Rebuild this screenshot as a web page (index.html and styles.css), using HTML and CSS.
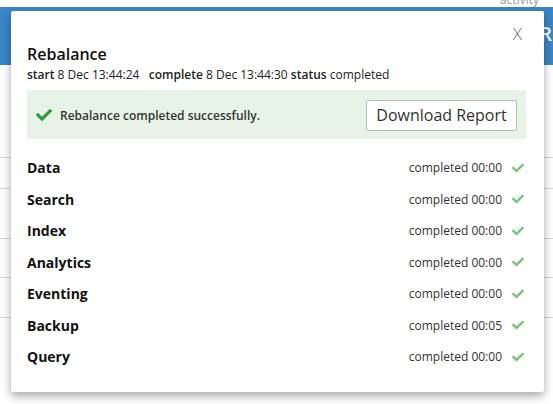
FILE: index.html
```html
<!DOCTYPE html>
<html>
<head>
<meta charset="utf-8">
<link rel="stylesheet" href="styles.css">
</head>
<body>
<div class="page">
  <div class="topnote">activity</div>
  <div class="band"><span class="band-letter">R</span></div>
  <div class="bg-list">
    <div class="bg-row r1"></div>
    <div class="bg-row r2"></div>
    <div class="bg-row r3"></div>
    <div class="bg-row r4"></div>
    <div class="bg-row r5"></div>
  </div>

  <div class="modal">
    <button class="close">X</button>
    <div class="header">
      <h2 class="title">Rebalance</h2>
      <div class="meta"><b>start</b> 8 Dec 13:44:24 &nbsp; <b>complete</b> 8 Dec 13:44:30 <b>status</b> completed</div>
    </div>
    <div class="alert">
      <div class="alert-msg">
        <svg class="alert-check" viewBox="0 0 512 512"><path d="M173.898 439.404l-166.4-166.4c-9.997-9.997-9.997-26.206 0-36.204l36.203-36.204c9.997-9.998 26.207-9.998 36.204 0L192 312.69 432.095 72.596c9.997-9.997 26.207-9.997 36.204 0l36.203 36.204c9.997 9.997 9.997 26.206 0 36.204l-294.4 294.401c-9.998 9.997-26.207 9.997-36.204-.001z"/></svg>
        <span>Rebalance completed successfully.</span>
      </div>
      <button class="btn">Download Report</button>
    </div>
    <div class="services">
      <div class="svc"><span class="svc-name">Data</span><span class="svc-status">completed 00:00<svg class="ok" viewBox="0 0 512 512"><path d="M173.898 439.404l-166.4-166.4c-9.997-9.997-9.997-26.206 0-36.204l36.203-36.204c9.997-9.998 26.207-9.998 36.204 0L192 312.69 432.095 72.596c9.997-9.997 26.207-9.997 36.204 0l36.203 36.204c9.997 9.997 9.997 26.206 0 36.204l-294.4 294.401c-9.998 9.997-26.207 9.997-36.204-.001z"/></svg></span></div>
      <div class="svc"><span class="svc-name">Search</span><span class="svc-status">completed 00:00<svg class="ok" viewBox="0 0 512 512"><path d="M173.898 439.404l-166.4-166.4c-9.997-9.997-9.997-26.206 0-36.204l36.203-36.204c9.997-9.998 26.207-9.998 36.204 0L192 312.69 432.095 72.596c9.997-9.997 26.207-9.997 36.204 0l36.203 36.204c9.997 9.997 9.997 26.206 0 36.204l-294.4 294.401c-9.998 9.997-26.207 9.997-36.204-.001z"/></svg></span></div>
      <div class="svc"><span class="svc-name">Index</span><span class="svc-status">completed 00:00<svg class="ok" viewBox="0 0 512 512"><path d="M173.898 439.404l-166.4-166.4c-9.997-9.997-9.997-26.206 0-36.204l36.203-36.204c9.997-9.998 26.207-9.998 36.204 0L192 312.69 432.095 72.596c9.997-9.997 26.207-9.997 36.204 0l36.203 36.204c9.997 9.997 9.997 26.206 0 36.204l-294.4 294.401c-9.998 9.997-26.207 9.997-36.204-.001z"/></svg></span></div>
      <div class="svc"><span class="svc-name">Analytics</span><span class="svc-status">completed 00:00<svg class="ok" viewBox="0 0 512 512"><path d="M173.898 439.404l-166.4-166.4c-9.997-9.997-9.997-26.206 0-36.204l36.203-36.204c9.997-9.998 26.207-9.998 36.204 0L192 312.69 432.095 72.596c9.997-9.997 26.207-9.997 36.204 0l36.203 36.204c9.997 9.997 9.997 26.206 0 36.204l-294.4 294.401c-9.998 9.997-26.207 9.997-36.204-.001z"/></svg></span></div>
      <div class="svc"><span class="svc-name">Eventing</span><span class="svc-status">completed 00:00<svg class="ok" viewBox="0 0 512 512"><path d="M173.898 439.404l-166.4-166.4c-9.997-9.997-9.997-26.206 0-36.204l36.203-36.204c9.997-9.998 26.207-9.998 36.204 0L192 312.69 432.095 72.596c9.997-9.997 26.207-9.997 36.204 0l36.203 36.204c9.997 9.997 9.997 26.206 0 36.204l-294.4 294.401c-9.998 9.997-26.207 9.997-36.204-.001z"/></svg></span></div>
      <div class="svc"><span class="svc-name">Backup</span><span class="svc-status">completed 00:05<svg class="ok" viewBox="0 0 512 512"><path d="M173.898 439.404l-166.4-166.4c-9.997-9.997-9.997-26.206 0-36.204l36.203-36.204c9.997-9.998 26.207-9.998 36.204 0L192 312.69 432.095 72.596c9.997-9.997 26.207-9.997 36.204 0l36.203 36.204c9.997 9.997 9.997 26.206 0 36.204l-294.4 294.401c-9.998 9.997-26.207 9.997-36.204-.001z"/></svg></span></div>
      <div class="svc"><span class="svc-name">Query</span><span class="svc-status">completed 00:00<svg class="ok" viewBox="0 0 512 512"><path d="M173.898 439.404l-166.4-166.4c-9.997-9.997-9.997-26.206 0-36.204l36.203-36.204c9.997-9.998 26.207-9.998 36.204 0L192 312.69 432.095 72.596c9.997-9.997 26.207-9.997 36.204 0l36.203 36.204c9.997 9.997 9.997 26.206 0 36.204l-294.4 294.401c-9.998 9.997-26.207 9.997-36.204-.001z"/></svg></span></div>
    </div>
  </div>
</div>
</body>
</html>
```

FILE: styles.css
```css
html, body {
  margin: 0;
  padding: 0;
  background: #fff;
  font-family: "Open Sans", "Liberation Sans", sans-serif;
  color: #222;
  overflow: hidden;
}

.page {
  position: relative;
  width: 553px;
  height: 404px;
  overflow: hidden;
}

.topnote {
  position: absolute;
  top: -9px;
  right: 14px;
  font-size: 12px;
  color: #999;
}

.band {
  margin-top: 7px;
  height: 58px;
  background: #3a86c8;
  display: flex;
  justify-content: flex-end;
  align-items: center;
}

.band-letter {
  color: #fff;
  font-size: 19px;
  font-weight: 600;
  margin-right: 1px;
  margin-top: -4px;
}

.bg-row {
  border-bottom: 1px solid #d6d6d6;
}
.r1 { height: 92px; }
.r2 { height: 30px; }
.r3 { height: 49px; }
.r4 { height: 38px; }
.r5 { height: 39px; }

.modal {
  position: absolute;
  left: 11px;
  top: 11px;
  width: 533px;
  height: 381px;
  box-sizing: border-box;
  padding: 0 18px 0 16px;
  background: #fff;
  border-radius: 2px;
  box-shadow: 0 4px 10px rgba(0, 0, 0, 0.35);
}

.close {
  position: absolute;
  top: 12px;
  right: 22px;
  border: 0;
  background: none;
  padding: 0;
  font-family: "Open Sans", "Liberation Sans", sans-serif;
  font-size: 17px;
  font-weight: 300;
  color: #6b6b6b;
  line-height: 22px;
}

.header {
  padding-top: 32px;
}

.title {
  margin: 0;
  font-size: 16px;
  font-weight: 600;
  line-height: 23px;
  color: #111;
}

.meta {
  font-size: 12px;
  line-height: 17px;
  color: #222;
}
.meta b {
  font-weight: 600;
}

.alert {
  margin-top: 7px;
  height: 49px;
  background: #e8f3e7;
  display: flex;
  align-items: center;
  justify-content: space-between;
  padding: 1px 9px 0 9px;
  box-sizing: border-box;
}

.alert-msg {
  display: flex;
  align-items: center;
  gap: 8px;
  font-size: 12px;
  font-weight: 600;
  color: #333;
}

.alert-check {
  width: 16px;
  height: 16px;
  fill: #2c9b3c;
}

.btn {
  height: 31px;
  width: 151px;
  background: #fff;
  border: 1px solid #b5b9c0;
  border-radius: 2px;
  font-family: "Open Sans", "Liberation Sans", sans-serif;
  font-size: 16px;
  color: #333;
  padding: 0;
}

.services {
  margin-top: 13px;
}

.svc {
  height: 31.5px;
  display: flex;
  align-items: center;
  justify-content: space-between;
  padding-right: 2px;
}

.svc-name {
  font-size: 14px;
  font-weight: 700;
  color: #111;
}

.svc-status {
  display: flex;
  align-items: center;
  gap: 10px;
  font-size: 12px;
  color: #333;
}

.ok {
  width: 12px;
  height: 12px;
  fill: #7cc47e;
}
```
